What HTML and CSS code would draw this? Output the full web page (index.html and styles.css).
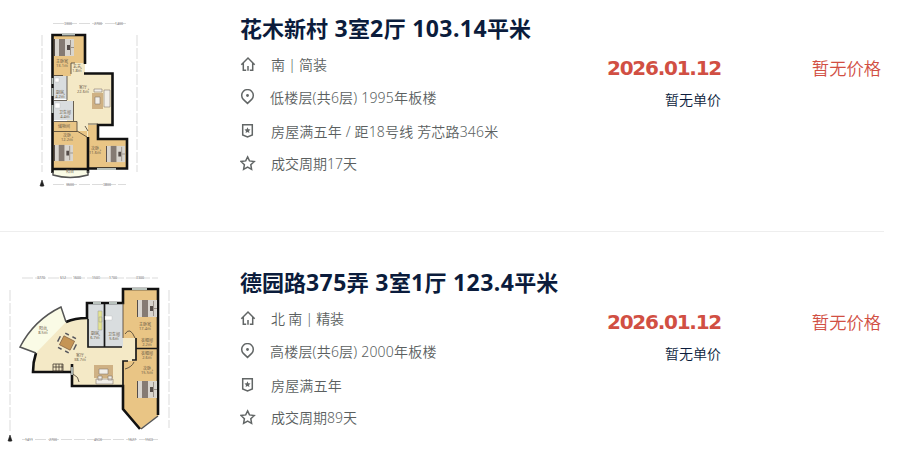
FILE: index.html
```html
<!DOCTYPE html>
<html lang="zh-CN">
<head>
  <meta charset="UTF-8" />
  <meta name="viewport" content="width=device-width, initial-scale=1.0"/>
  <title>成交房源</title>
  <link rel="stylesheet" href="styles.css">
</head>
<body>
  <svg class="sprite" width="0" height="0">
    <symbol id="icon-house" viewBox="0 0 16 16">
      <path d="M1.300 8.700 8 2l6.700 6.700M3.300 7v7.300h2.900M12.700 7v7.300H9.800M8 10v4.800" />
    </symbol>
    <symbol id="icon-pin" viewBox="0 0 16 16">
      <path d="M7.500 14.400 3.300 10.400a5.800 5.800 0 1 1 8.400 0z" />
      <circle class="solid" cx="7.500" cy="6.500" r="1.400" />
    </symbol>
    <symbol id="icon-badge" viewBox="0 0 16 16">
      <path d="M2.700 1.700h9.600v10.300l-4.800 2-4.800-2z" />
      <path class="solid" d="m7.500 4.300.9 1.900 2.100.3L9 8l.4 2.100-1.900-1-1.900 1L6 8 4.500 6.500l2.100-.3z" />
    </symbol>
    <symbol id="icon-star" viewBox="0 0 16 16">
      <path d="m7.600 1.900 1.900 4 4.700.6-3.400 3.200.8 4.600-4-2.200-4 2.200.8-4.600L1 6.500l4.700-.6z" />
    </symbol>
    <symbol id="bed" viewBox="0 0 20 17">
      <path fill="#d9d5ce" d="M0 0h20v17H0z" />
      <path fill="#857b73" d="M5 0h6v17H5z" />
      <path fill="#544c48" d="M0 0h1v17H0zM13 6h3v5h-3z" />
      <path fill="none" stroke="#9b9289" d="M16.500 1v15M17 8.500h3" />
    </symbol>
  </svg>

  <ul class="house-list">
    <li class="house">
      <div class="plan">
        <svg viewBox="0 0 180 200">
          <g class="ruler">
            <path d="M53 23.500h73M42 35v137M137 35v137M53 184.500h73" />
          </g>
          <g class="ruler-text">
            <text x="68" y="25">3300</text><text x="98" y="25">2700</text><text x="119" y="25">1400</text>
            <text x="70" y="186">3600</text><text x="107" y="186">3800</text>
          </g>
          <path class="north" d="m42 180 2 6h-4zM42 184v3" />
          <path class="wood" d="M53 35h32v38H71v3H53z" />
          <path class="cream" d="M71 63h14v11h28v51H98v12H76v-15h-9V76h4z" />
          <path class="tile" d="M53 76h14v23H53zM53 101h20v19H53z" />
          <path class="wood" d="M53 122h24v9h10v38H53zM88 125h10v14h29v30H88z" />
          <path class="balcony" d="M53 169h35v6q-17 5-35 0z" />
          <path class="wall" d="M52.500 173V35H85v29M84 73.500h28.500V125H98v14h29v29.500H88M88 137v36M52.500 169H88" />
          <path class="thin" d="M54 75.500h9M71 74V63h4M67 76v24M54 100.500h13M73.500 101v20M54 121.500h23v10H54M77 131l10 6M88 124h10M85 126l3 5" />
          <path class="glass" d="M62 34.500h13M52.500 78v6M52.500 88v8M97 169h19M52.500 105v8" />
          <path class="rail" d="M53 172v3q17 5 35 0v-4" />
          <use href="#bed" x="54" y="39" width="20" height="17" />
          <use href="#bed" x="54" y="144" width="19" height="18" />
          <use href="#bed" x="106" y="145" width="19" height="18" />
          <path class="rug" d="M92 93h11v16H92z" /><path class="sofa" d="M104 90h6v17h-6zM94 89h8v3h-8zM95 97h5v7h-5z" />
          <path class="fixture" d="M55 78h4v4h-4zM55 103h5v5h-5z" />
          <g class="room-text">
            <text x="62" y="63">主卧室</text><text x="62" y="67">13.1㎡</text><text x="77" y="68">玄关</text><text x="77" y="72">1.8㎡</text>
            <text x="83" y="89">客厅</text><text x="83" y="93">22.6㎡</text><text x="60" y="94">厨房</text><text x="60" y="98">4.2㎡</text>
            <text x="65" y="114">卫生间</text><text x="65" y="118">4.4㎡</text><text x="64" y="128">储物间</text>
            <text x="67" y="137">次卧</text><text x="67" y="141">12.2㎡</text><text x="95" y="150">次卧</text><text x="95" y="154">11.6㎡</text><text x="70" y="173">阳台</text>
          </g>
        </svg>
      </div>
      <div class="info">
        <h2 class="title">花木新村<span class="num"> 3</span>室<span class="num">2</span>厅<span class="num"> 103.14</span>平米</h2>
        <p class="row"><svg class="icon"><use href="#icon-house" /></svg><span class="face">南 | 简装</span></p>
        <p class="row"><svg class="icon"><use href="#icon-pin" /></svg><span class="floor">低楼层(共6层) 1995年板楼</span></p>
        <p class="row tag"><svg class="icon"><use href="#icon-badge" /></svg><span>房屋满五年 / 距18号线 芳芯路346米</span></p>
        <p class="row"><svg class="icon"><use href="#icon-star" /></svg><span>成交周期17天</span></p>
      </div>
      <div class="deal">
        <div class="date">2026.01.12</div>
        <div class="unit-price">暂无单价</div>
      </div>
      <div class="price">暂无价格</div>
    </li>

    <li class="house">
      <div class="plan">
        <svg viewBox="0 254 180 200">
          <g class="ruler">
            <path d="M22 278h136M10 290v143M169 290v138M22 439.500h136" />
          </g>
          <g class="ruler-text">
            <text x="41" y="279">3770</text><text x="63" y="279">612</text><text x="77" y="279">1600</text><text x="96" y="279">1500</text><text x="113" y="279">1700</text><text x="140" y="279">3300</text>
            <text x="29" y="441">1411</text><text x="53" y="441">2700</text><text x="98" y="441">4500</text><text x="132" y="441">1627</text><text x="149" y="441">1500</text>
          </g>
          <path class="north" d="m10 435 2 6H8zM10 438v4" />
          <path class="cream" d="M33 372q0-10 3-19 13-22 30-31l21-4v29h36v-9h13v24h-13v24H72v-14z" />
          <path class="balcony" d="M20 347q14-27 41-40l5 15-30 31z" />
          <path class="tile" d="M88 303h35v44H88z" />
          <path class="wood" d="M123 289h36v126l-19 14-17-20v-48h13v-23h-13z" />
          <path class="wall" d="M36 353q-3 9-3 19h39v-8M72 369v17h51v23l17 20M158 415V289h-35v14H87v15q-12 0-21 4" />
          <path class="wall-mid" d="M88 319v28h34M104.500 304v43M123 386v-25h5M136 348.500h22M136 338v22h-4" />
          <path class="thin" d="M123 303v35" />
          <path class="rail" d="m36 353-16-6q14-27 41-40l5 15" />
          <path class="rail" d="m141 429 17-13" />
          <path class="glass" d="M132 289h15M93 303h8M109 303h8M72 367v8" />
          <path class="thin" d="M53 371v-7h10v7zM56 364v7M59 364v7M62 364v7M53 367h10M125 334q5-8 10 4M125 369q7-2 9-7M73 374q6 3 6 8" />
          <use href="#bed" x="137" y="300" width="20" height="17" />
          <use href="#bed" x="137" y="381" width="20" height="17" />
          <path class="rug" d="M94 365h19v13H94z" /><path class="sofa" d="M96 379h17v5H96zM98 376h4v4h-4zM108 376h4v4h-4zM99 369h9v5h-9z" />
          <path class="stove" d="M98 311h4v19h-4zM99 317h3v5h-3z" />
          <path class="fixture" d="M105 316h7v4h-7z" />
          <g class="dining" transform="rotate(27 67 343)">
            <path class="table" d="M61 338h12v10H61z" /><path class="chair" d="M61 335h4M69 335h4M61 351h4M69 351h4M58 340v6M76 340v6" />
          </g>
          <g class="room-text">
            <text x="43" y="330">阳台</text><text x="43" y="334">8.5㎡</text><text x="95" y="335">厨房</text><text x="95" y="339">6.7㎡</text>
            <text x="114" y="336">卫生间</text><text x="114" y="340">5.6㎡</text><text x="145" y="326">主卧室</text><text x="145" y="330">17.4㎡</text>
            <text x="147" y="342">衣帽间</text><text x="147" y="346">2.2㎡</text><text x="147" y="355">衣帽间</text><text x="147" y="359">2.6㎡</text>
            <text x="80" y="357">客厅</text><text x="80" y="361">38.7㎡</text><text x="147" y="370">次卧</text><text x="147" y="374">15.5㎡</text>
          </g>
        </svg>
      </div>
      <div class="info">
        <h2 class="title">德园路<span class="num">375</span>弄<span class="num"> 3</span>室<span class="num">1</span>厅<span class="num"> 123.4</span>平米</h2>
        <p class="row"><svg class="icon"><use href="#icon-house" /></svg><span class="face">北 南 | 精装</span></p>
        <p class="row"><svg class="icon"><use href="#icon-pin" /></svg><span class="floor">高楼层(共6层) 2000年板楼</span></p>
        <p class="row tag"><svg class="icon"><use href="#icon-badge" /></svg><span>房屋满五年</span></p>
        <p class="row"><svg class="icon"><use href="#icon-star" /></svg><span>成交周期89天</span></p>
      </div>
      <div class="deal">
        <div class="date">2026.01.12</div>
        <div class="unit-price">暂无单价</div>
      </div>
      <div class="price">暂无价格</div>
    </li>
  </ul>
</body>
</html>
```
FILE: styles.css
```css
* { box-sizing: border-box; }
body {
  margin: 0;
  background: #fff;
  font-family: "Noto Sans", "Noto Sans CJK SC", sans-serif;
  color: #0b1c3c;
}
.sprite { display: block; }
.house-list {
  width: 884px;
  margin: 0;
  padding: 0;
  list-style: none;
}
.house {
  display: flex;
  height: 232px;
  border-bottom: 1px solid #eee;
}
.house + .house {
  height: 227px;
  padding-top: 22px;
  border-bottom: none;
}
.plan {
  width: 240px;
  flex: none;
}
.plan svg {
  display: block;
  width: 180px;
  height: 200px;
}
.info {
  width: 340px;
  flex: none;
  padding-top: 10px;
}
.title {
  height: 36px;
  margin: 0 0 5px;
  font-size: 22px;
  line-height: 36px;
  font-weight: 700;
  white-space: nowrap;
}
.num {
  font-size: 23px;
  line-height: 1;
  letter-spacing: .45px;
}
.row {
  display: flex;
  align-items: center;
  gap: 15px;
  height: 33px;
  margin: 0;
  padding-bottom: 7px;
  font-size: 14px;
  font-weight: 350;
  color: #5b5f5f;
  white-space: nowrap;
}
.tag {
  padding-bottom: 5px;
  letter-spacing: .17px;
}
.face { letter-spacing: -.2px; }
.floor {
  margin-left: -1px;
  letter-spacing: .2px;
}
.icon {
  width: 16px;
  height: 16px;
  flex: none;
  fill: none;
  stroke: #626666;
  stroke-width: 1.5;
}
.solid { fill: #626666; stroke: none; }
.deal {
  width: 141px;
  flex: none;
  padding-top: 54px;
  text-align: right;
}
.date {
  font-family: "DejaVu Sans", sans-serif;
  font-size: 20px;
  line-height: 28px;
  font-weight: 700;
  letter-spacing: -1.25px;
  color: #d14f43;
}
.unit-price {
  margin-top: 6px;
  font-size: 14px;
  line-height: 24px;
  font-weight: 350;
}
.price {
  flex: 1;
  padding: 55px 3px 0 0;
  font-size: 17.3px;
  line-height: 28px;
  font-weight: 350;
  text-align: right;
  color: #d14f43;
}

/* floor plans */
.ruler path { fill: none; stroke: #c4c4c4; stroke-width: .6; stroke-dasharray: 11 2; }
.ruler-text { font-size: 3.5px; fill: #777; text-anchor: middle; }
.room-text { font-size: 4px; fill: #6a5a46; text-anchor: middle; }
.north { fill: #222; stroke: #222; stroke-width: .6; }
.wood { fill: #e9c585; }
.cream { fill: #f4e9c6; }
.tile { fill: #d9dddf; }
.balcony { fill: #fafbe6; }
.wall { fill: none; stroke: #111; stroke-width: 2.6; }
.wall-mid { fill: none; stroke: #181818; stroke-width: 1.7; }
.thin { fill: none; stroke: #443b30; stroke-width: .8; }
.glass { fill: none; stroke: #b9c2bd; stroke-width: 1.8; }
.rail { fill: none; stroke: #555; stroke-width: 1.5; }
.rug { fill: #cfb184; }
.sofa { fill: #f1eee8; stroke: #87796c; stroke-width: .6; }
.fixture { fill: #fff; stroke: #bbb; stroke-width: .4; }
.stove { fill: #e4e391; stroke: #999; stroke-width: .5; }
.table { fill: #c59455; stroke: #78563a; stroke-width: .6; }
.chair { fill: none; stroke: #57575e; stroke-width: 1.5; }
```
